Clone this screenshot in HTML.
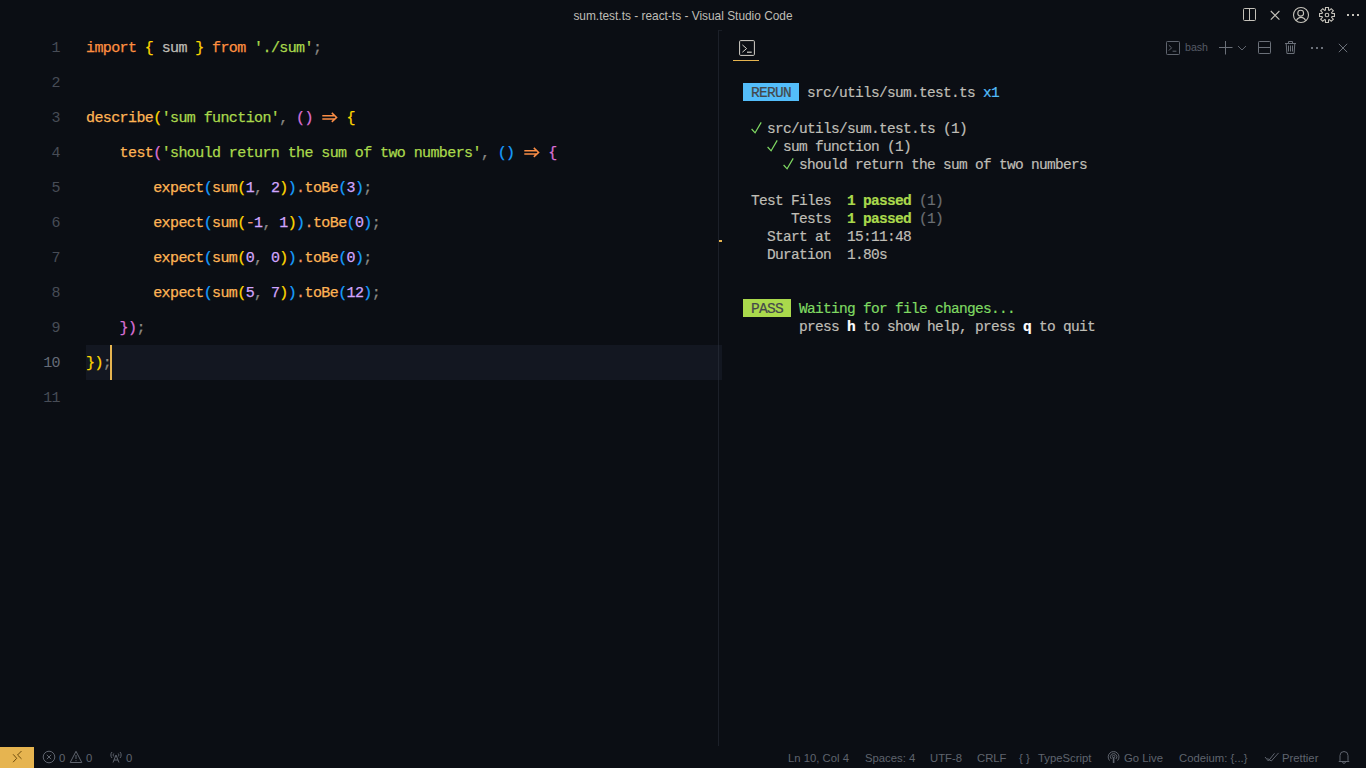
<!DOCTYPE html>
<html><head><meta charset="utf-8">
<style>
*{margin:0;padding:0;box-sizing:border-box}
html,body{width:1366px;height:768px;overflow:hidden;background:#0b0e14;font-family:"Liberation Sans",sans-serif}
.abs{position:absolute}
#title{position:absolute;left:0;top:1px;width:1366px;height:30px;color:#bfbdb6;font-size:11.9px;text-align:center;line-height:30px}
#editor{position:absolute;left:0;top:30px;width:718px;height:716px;background:#0b0e14}
.ln{position:absolute;left:0;width:60px;text-align:right;font-family:"Liberation Mono",monospace;font-size:15px;letter-spacing:-0.6px;line-height:35px;height:35px;color:#474c56}
.cl{-webkit-text-stroke:0.25px currentColor;position:absolute;left:86px;font-family:"Liberation Mono",monospace;font-size:15px;letter-spacing:-0.6px;line-height:35px;height:35px;white-space:pre;color:#bfbdb6}
.act{color:#656b77}
.k{color:#ff8f40}.f{color:#ffb454}.s{color:#aad94c}.n{color:#d2a6ff}.o{color:#f29668}.p{color:#8a8984}
.b1{color:#ffd700}.b2{color:#da70d6}.b3{color:#179fff}
.arr{display:inline-block;width:16.8px;height:35px;vertical-align:top;position:relative}
.arr svg{position:absolute;left:1px;top:11px}
#panel{display:none}
#sash{position:absolute;left:718px;top:30px;width:1px;height:716px;background:rgba(60,66,80,0.35)}
.t{-webkit-text-stroke:0.2px currentColor;position:absolute;left:743px;font-family:"Liberation Mono",monospace;font-size:14.5px;letter-spacing:-0.7px;line-height:18px;height:18px;white-space:pre;color:#bfbdb6}
.g{color:#7fd962}.bg{color:#aad94c;font-weight:bold}.dim{color:#6c6f73}.bl{color:#53bdfa}.wb{color:#fff;font-weight:bold}
.badge{color:#44474b;display:inline-block;height:18px;vertical-align:top;position:relative;top:-1px;line-height:21px;overflow:hidden}
#status{position:absolute;left:0;top:747px;width:1366px;height:21px;background:#0b0e14}
.si{position:absolute;height:21px;line-height:23px;white-space:nowrap;color:#5f646e;font-size:11.3px}
</style></head><body>
<div id="title">sum.test.ts - react-ts - Visual Studio Code</div>

<div id="editor">
  <div class="abs" style="left:86px;top:315px;width:636px;height:35px;background:#131721"></div>
  <div class="ln" style="top:1px">1</div>
  <div class="cl" style="top:1px"><span class="k">import</span> <span class="b1">{</span> sum <span class="b1">}</span> <span class="k">from</span> <span class="s">'./sum'</span><span class="p">;</span></div>
  <div class="ln" style="top:36px">2</div>
  <div class="ln" style="top:71px">3</div>
  <div class="cl" style="top:71px"><span class="f">describe</span><span class="b1">(</span><span class="s">'sum function'</span><span class="p">,</span> <span class="b2">()</span> <span class="arr"><svg width="16" height="11" viewBox="0 0 16 11"><path d="M0.3 3.7H13M0.3 7.1H13M9.8 0.9L14.6 5.4L9.8 9.9" fill="none" stroke="#fa8d45" stroke-width="1.5"/></svg></span> <span class="b1">{</span></div>
  <div class="ln" style="top:106px">4</div>
  <div class="cl" style="top:106px">    <span class="f">test</span><span class="b2">(</span><span class="s">'should return the sum of two numbers'</span><span class="p">,</span> <span class="b3">()</span> <span class="arr"><svg width="16" height="11" viewBox="0 0 16 11"><path d="M0.3 3.7H13M0.3 7.1H13M9.8 0.9L14.6 5.4L9.8 9.9" fill="none" stroke="#fa8d45" stroke-width="1.5"/></svg></span> <span class="b2">{</span></div>
  <div class="ln" style="top:141px">5</div>
  <div class="cl" style="top:141px">        <span class="f">expect</span><span class="b3">(</span><span class="f">sum</span><span class="b1">(</span><span class="n">1</span><span class="p">,</span> <span class="n">2</span><span class="b1">)</span><span class="b3">)</span><span class="o">.</span><span class="f">toBe</span><span class="b3">(</span><span class="n">3</span><span class="b3">)</span><span class="p">;</span></div>
  <div class="ln" style="top:176px">6</div>
  <div class="cl" style="top:176px">        <span class="f">expect</span><span class="b3">(</span><span class="f">sum</span><span class="b1">(</span><span class="o">-</span><span class="n">1</span><span class="p">,</span> <span class="n">1</span><span class="b1">)</span><span class="b3">)</span><span class="o">.</span><span class="f">toBe</span><span class="b3">(</span><span class="n">0</span><span class="b3">)</span><span class="p">;</span></div>
  <div class="ln" style="top:211px">7</div>
  <div class="cl" style="top:211px">        <span class="f">expect</span><span class="b3">(</span><span class="f">sum</span><span class="b1">(</span><span class="n">0</span><span class="p">,</span> <span class="n">0</span><span class="b1">)</span><span class="b3">)</span><span class="o">.</span><span class="f">toBe</span><span class="b3">(</span><span class="n">0</span><span class="b3">)</span><span class="p">;</span></div>
  <div class="ln" style="top:246px">8</div>
  <div class="cl" style="top:246px">        <span class="f">expect</span><span class="b3">(</span><span class="f">sum</span><span class="b1">(</span><span class="n">5</span><span class="p">,</span> <span class="n">7</span><span class="b1">)</span><span class="b3">)</span><span class="o">.</span><span class="f">toBe</span><span class="b3">(</span><span class="n">12</span><span class="b3">)</span><span class="p">;</span></div>
  <div class="ln" style="top:281px">9</div>
  <div class="cl" style="top:281px">    <span class="b2">})</span><span class="p">;</span></div>
  <div class="ln act" style="top:316px">10</div>
  <div class="cl" style="top:316px"><span class="b1">})</span><span class="p">;</span></div>
  <div class="ln" style="top:351px">11</div>

  <div class="abs" style="left:110px;top:315px;width:2px;height:35px;background:#e6b450"></div>
</div>

<div id="panel"></div>
<div class="t" style="top:84px"><span class="badge" style="background:#53bdfa"> RERUN </span> src/utils/sum.test.ts <span class="bl">x1</span></div>
<div class="t" style="top:120px">   src/utils/sum.test.ts (1)</div>
<div class="t" style="top:138px">     sum function (1)</div>
<div class="t" style="top:156px">       should return the sum of two numbers</div>
<div class="t" style="top:192px"> Test Files  <span class="bg">1 passed</span> <span class="dim">(1)</span></div>
<div class="t" style="top:210px">      Tests  <span class="bg">1 passed</span> <span class="dim">(1)</span></div>
<div class="t" style="top:228px">   Start at  15:11:48</div>
<div class="t" style="top:246px">   Duration  1.80s</div>
<div class="t" style="top:300px"><span class="badge" style="background:#aad94c"> PASS </span> <span class="g">Waiting for file changes...</span></div>
<div class="t" style="top:318px">       press <span class="wb">h</span> to show help, press <span class="wb">q</span> to quit</div>
<svg class="abs" style="left:751px;top:122px" width="11" height="12" viewBox="0 0 11 12"><path d="M0.6 7L4.1 10.8L10.2 0.4" fill="none" stroke="#7fd962" stroke-width="1.2"/></svg>
<svg class="abs" style="left:767px;top:140px" width="11" height="12" viewBox="0 0 11 12"><path d="M0.6 7L4.1 10.8L10.2 0.4" fill="none" stroke="#7fd962" stroke-width="1.2"/></svg>
<svg class="abs" style="left:783px;top:158px" width="11" height="12" viewBox="0 0 11 12"><path d="M0.6 7L4.1 10.8L10.2 0.4" fill="none" stroke="#7fd962" stroke-width="1.2"/></svg>

<div id="sash"></div>
<div class="abs" style="left:719px;top:30px;width:3px;height:1px;background:rgba(60,66,80,0.3)"></div>
<div class="abs" style="left:719px;top:240px;width:3px;height:2px;background:#e6b450"></div>

<div id="status"></div>
<!-- title bar icons -->
<svg class="abs" style="left:1240px;top:5px" width="20" height="20" viewBox="0 0 20 20" fill="none" stroke="#c5c2ba" stroke-width="1"><rect x="3.5" y="3.5" width="12" height="12" rx="1"/><path d="M9.5 3.5V15.5"/></svg>
<svg class="abs" style="left:1265px;top:5px" width="20" height="20" viewBox="0 0 20 20" fill="none" stroke="#c5c2ba" stroke-width="1.1"><path d="M5.8 6L14.4 14.6M14.4 6L5.8 14.6"/></svg>
<svg class="abs" style="left:1291px;top:5px" width="20" height="20" viewBox="0 0 20 20" fill="none" stroke="#c5c2ba" stroke-width="1.1"><circle cx="10" cy="10" r="7.5"/><circle cx="9.7" cy="8.2" r="2.9"/><path d="M5.3 15.8C6.3 13.6 8 12.4 10 12.4C12 12.4 13.7 13.6 14.7 15.8"/></svg>
<svg class="abs" style="left:1319px;top:7px" width="16" height="16" viewBox="0 0 16 16" fill="none" stroke="#c5c2ba" stroke-width="1.1"><path d="M12.97 6.46 L15.45 6.49 L15.45 9.51 L12.97 9.54 L12.60 10.43 L14.33 12.20 L12.20 14.33 L10.43 12.60 L9.54 12.97 L9.51 15.45 L6.49 15.45 L6.46 12.97 L5.57 12.60 L3.80 14.33 L1.67 12.20 L3.40 10.43 L3.03 9.54 L0.55 9.51 L0.55 6.49 L3.03 6.46 L3.40 5.57 L1.67 3.80 L3.80 1.67 L5.57 3.40 L6.46 3.03 L6.49 0.55 L9.51 0.55 L9.54 3.03 L10.43 3.40 L12.20 1.67 L14.33 3.80 L12.60 5.57Z"/><circle cx="8" cy="8" r="1.8"/></svg>
<div class="abs" style="left:1347px;top:14px;width:2px;height:2px;background:#c5c2ba"></div>
<div class="abs" style="left:1352px;top:14px;width:2px;height:2px;background:#c5c2ba"></div>
<div class="abs" style="left:1357px;top:14px;width:2px;height:2px;background:#c5c2ba"></div>

<!-- panel header -->
<svg class="abs" style="left:739px;top:40px" width="16" height="16" viewBox="0 0 16 16" fill="none" stroke="#d4d1c9" stroke-width="1"><rect x="0.6" y="0.6" width="14.8" height="14.8" rx="1"/><path d="M3.4 4.9L7.6 8.6L3.4 12.2"/><path d="M8 12.2H12.7" stroke-width="1.2"/></svg>
<div class="abs" style="left:733px;top:60px;width:26px;height:1px;background:#e6b450"></div>

<svg class="abs" style="left:1166px;top:41px" width="14" height="14" viewBox="0 0 14 14" fill="none" stroke="#5f646e" stroke-width="1"><rect x="0.5" y="0.5" width="13" height="13" rx="0.8"/><path d="M2.8 4.2L5.6 6.8L2.8 9.6"/><path d="M6.6 10.2H10.4"/></svg>
<div class="abs" style="left:1185px;top:39px;height:16px;line-height:16px;font-size:10.6px;color:#565b66">bash</div>
<svg class="abs" style="left:1218px;top:40px" width="15" height="15" viewBox="0 0 15 15" fill="none" stroke="#6b7079" stroke-width="1"><path d="M7.5 1V14.5M1 7.5H14.5"/></svg>
<svg class="abs" style="left:1237px;top:45px" width="10" height="6" viewBox="0 0 10 6" fill="none" stroke="#5f646e" stroke-width="1"><path d="M1 1L5 5L9 1"/></svg>
<svg class="abs" style="left:1257px;top:40px" width="15" height="15" viewBox="0 0 15 15" fill="none" stroke="#6b7079" stroke-width="1"><rect x="1.5" y="1.5" width="12" height="12" rx="0.8"/><path d="M1.5 7.5H13.5"/></svg>
<svg class="abs" style="left:1283px;top:40px" width="15" height="15" viewBox="0 0 15 15" fill="none" stroke="#6b7079" stroke-width="1"><path d="M2 3.5H13M5.5 3.5V1.5H9.5V3.5M3.2 3.5L3.9 13.5H11.1L11.8 3.5M5.5 5.5V11.5M7.5 5.5V11.5M9.5 5.5V11.5"/></svg>
<div class="abs" style="left:1311px;top:47px;width:2px;height:2px;background:#6b7079"></div>
<div class="abs" style="left:1316px;top:47px;width:2px;height:2px;background:#6b7079"></div>
<div class="abs" style="left:1321px;top:47px;width:2px;height:2px;background:#6b7079"></div>
<svg class="abs" style="left:1336px;top:41px" width="14" height="14" viewBox="0 0 14 14" fill="none" stroke="#6b7079" stroke-width="1"><path d="M2.8 2.8L11.2 11.2M11.2 2.8L2.8 11.2"/></svg>

<!-- status bar -->
<div class="abs" style="left:0;top:747px;width:34px;height:21px;background:#e6b450"></div>
<svg class="abs" style="left:12px;top:750px" width="12" height="14" viewBox="0 0 12 14" fill="none" stroke="#6e4c0c" stroke-width="1"><path d="M1.1 4.3L4.7 8.3L1.1 12.2M9.5 1L5.5 5L9.5 8.8"/></svg>
<svg class="abs" style="left:42px;top:750px" width="14" height="14" viewBox="0 0 14 14" fill="none" stroke="#5f646e" stroke-width="1"><circle cx="7" cy="7" r="5.8"/><path d="M4.8 4.8L9.2 9.2M9.2 4.8L4.8 9.2"/></svg>
<div class="si" style="left:59px;top:747px">0</div>
<svg class="abs" style="left:69px;top:750px" width="14" height="14" viewBox="0 0 14 14" fill="none" stroke="#5f646e" stroke-width="1"><path d="M7 1.3L12.8 12.5H1.2Z M7 5V9 M7 10.2V11.2"/></svg>
<div class="si" style="left:86px;top:747px">0</div>
<svg class="abs" style="left:109px;top:750px" width="14" height="14" viewBox="0 0 14 14" fill="none" stroke="#5f646e" stroke-width="1"><path d="M3 2C1.5 3.5 1.5 6.5 3 8M11 2C12.5 3.5 12.5 6.5 11 8M4.8 3.5C4 4.3 4 5.7 4.8 6.5M9.2 3.5C10 4.3 10 5.7 9.2 6.5M7 5L4 12.5M7 5L10 12.5M5 10H9"/></svg>
<div class="si" style="left:126px;top:747px">0</div>

<div class="si" style="left:788px;top:747px">Ln 10, Col 4</div>
<div class="si" style="left:865px;top:747px">Spaces: 4</div>
<div class="si" style="left:930px;top:747px">UTF-8</div>
<div class="si" style="left:977px;top:747px">CRLF</div>
<div class="si" style="left:1019px;top:747px">{ }</div>
<div class="si" style="left:1038px;top:747px">TypeScript</div>
<svg class="abs" style="left:1107px;top:750px" width="14" height="14" viewBox="0 0 14 14" fill="none" stroke="#5f646e" stroke-width="1"><path d="M4.3 9A3.2 3.2 0 1 1 8.9 9M2.6 10.6A5.4 5.4 0 1 1 10.6 10.6"/><circle cx="6.6" cy="6.5" r="1.2"/><path d="M6.6 7.5V13" stroke-width="1.6"/></svg>
<div class="si" style="left:1124px;top:747px">Go Live</div>
<div class="si" style="left:1179px;top:747px">Codeium: {...}</div>
<svg class="abs" style="left:1264px;top:752px" width="16" height="11" viewBox="0 0 16 11" fill="none" stroke="#5f646e" stroke-width="1"><path d="M1 5L4.4 9L10.5 1.3M3.5 6.5L7.3 9L14.6 0.9"/></svg>
<div class="si" style="left:1282px;top:747px">Prettier</div>
<svg class="abs" style="left:1338px;top:750px" width="12" height="14" viewBox="0 0 12 14" fill="none" stroke="#5f646e" stroke-width="1"><path d="M2 10.5V5.5A4 4 0 0 1 10 5.5V10.5L11 11.5H1Z M4.5 11.8A1.5 1.5 0 0 0 7.5 11.8"/></svg>

</body></html>
